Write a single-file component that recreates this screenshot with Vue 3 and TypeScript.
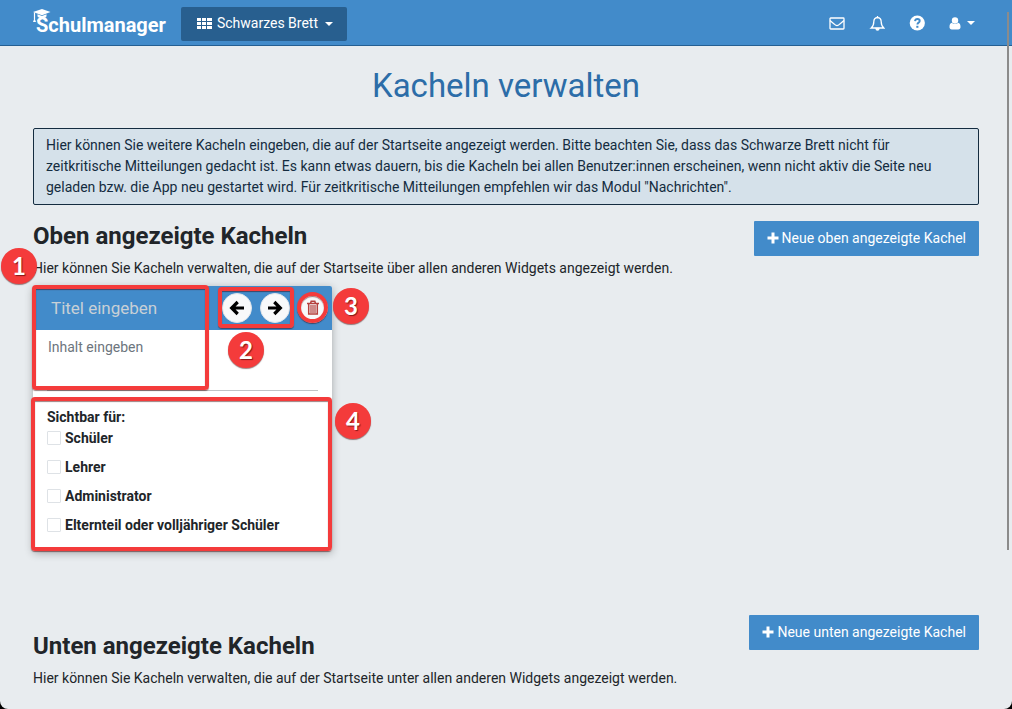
<script setup lang="ts">
import { ref } from 'vue'

interface Audience {
  id: string
  label: string
  checked: boolean
}

const title = ref('')
const content = ref('')
const audiences = ref<Audience[]>([
  { id: 'students', label: 'Schüler', checked: false },
  { id: 'teachers', label: 'Lehrer', checked: false },
  { id: 'admins', label: 'Administrator', checked: false },
  { id: 'parents', label: 'Elternteil oder volljähriger Schüler', checked: false },
])
</script>

<template>
  <div class="window">
    <div class="page">
      <header class="navbar">
        <a class="brand" href="#">
          <svg class="cap" viewBox="0 0 18 14" aria-hidden="true">
            <path d="M0 3 9 0l8.500 3L9 6.200z" fill="#fff" />
            <path d="M4.500 5.200v2.300L9 8.500l4.500-1V5.200L9 7z" fill="#fff" />
            <path d="M4.500 11.500 13 7.500M13.500 11 5 7.500" stroke="#fff" stroke-width="1.300" />
            <path d="M1.500 3.500V10" stroke="#fff" stroke-width="1.200" />
            <path d="M1.500 9 0 13h3z" fill="#fff" />
          </svg>
          <span>Schulmanager</span>
        </a>
        <button class="module" type="button">
          <svg class="grid-icon" viewBox="0 0 15 12" aria-hidden="true">
            <path d="M0 0h4v3H0zM5 0h4v3H5zM10 0h5v3h-5zM0 4h4v3H0zM5 4h4v3H5zM10 4h5v3h-5zM0 8h4v3H0zM5 8h4v3H5zM10 8h5v3h-5z" fill="#fff" />
          </svg>
          <span>Schwarzes Brett</span>
          <i class="caret"></i>
        </button>
        <nav class="tools">
          <a href="#" aria-label="Nachrichten">
            <svg width="16" height="14" viewBox="0 0 16 14" fill="none" stroke="#fff" stroke-width="1.300">
              <rect x="1" y="2" width="14" height="11" rx=".7" />
              <path d="M1 4.500c2 2 4 3.300 5.500 4.500q1.500 1.100 3 0C11 7.800 13 6.500 15 4.500" />
            </svg>
          </a>
          <a href="#" aria-label="Benachrichtigungen">
            <svg width="16" height="16" viewBox="0 0 16 16" fill="none" stroke="#fff" stroke-width="1.300">
              <path d="M8.500 2.500C5.800 2.700 4.800 4.500 4.800 6.800c0 3-.8 4.700-2.600 6.200h12.600c-1.800-1.500-2.600-3.200-2.600-6.200C12.200 4.500 11.200 2.700 8.500 2.500zM8.500 1v1.500" />
              <path d="M7 13.500q.1 1.600 1.500 1.600t1.500-1.600z" fill="#fff" />
            </svg>
          </a>
          <a href="#" aria-label="Hilfe">
            <svg width="16" height="16" viewBox="0 0 16 16">
              <circle cx="8.300" cy="8" r="7.600" fill="#fff" />
              <path d="M6 6.200C6.200 4.700 7.100 4 8.400 4c1.400 0 2.300.8 2.300 1.900 0 1.900-2.300 1.600-2.300 3.600" fill="none" stroke="#428bca" stroke-width="1.900" />
              <path d="M7.300 10.800h2.100v2H7.300z" fill="#428bca" />
            </svg>
          </a>
          <a href="#" class="user" aria-label="Benutzerkonto">
            <svg width="12" height="14" viewBox="0 0 12 14" fill="#fff">
              <circle cx="6" cy="4.500" r="3.200" />
              <path d="M3 6.800C1.200 7.100.5 8.600.5 11c0 1.600.8 2.500 2.300 2.500h6.400c1.500 0 2.300-.9 2.300-2.500C11.500 8.600 10.800 7.100 9 6.800 8 8.500 4 8.500 3 6.800z" />
            </svg>
            <i class="caret"></i>
          </a>
        </nav>
      </header>

      <main>
        <h1>Kacheln verwalten</h1>
        <p class="info">
          Hier können Sie weitere Kacheln eingeben, die auf der Startseite angezeigt werden. Bitte beachten Sie, dass das Schwarze Brett nicht für zeitkritische Mitteilungen gedacht ist. Es kann etwas dauern, bis die Kacheln bei allen Benutzer:innen erscheinen, wenn nicht aktiv die Seite neu geladen bzw. die App neu gestartet wird. Für zeitkritische Mitteilungen empfehlen wir das Modul "Nachrichten".
        </p>

        <section class="upper">
          <div class="section-head">
            <h2>Oben angezeigte Kacheln</h2>
            <button class="add" type="button">
              <svg width="12" height="14" viewBox="0 0 12 14" aria-hidden="true"><path d="M4.500 0.500h3v4h4v3h-4v4h-3v-4h-4v-3h4z" fill="#fff" /></svg>
              Neue oben angezeigte Kachel
            </button>
          </div>
          <p class="hint">Hier können Sie Kacheln verwalten, die auf der Startseite über allen anderen Widgets angezeigt werden.</p>

          <article class="tile">
            <div class="tile-head">
              <input v-model="title" class="tile-title" type="text" placeholder="Titel eingeben" aria-label="Titel" />
              <button class="round" type="button" aria-label="Nach links">
                <svg width="16" height="16" viewBox="0 0 16 16" fill="none" stroke="#000" stroke-width="3.200"><path d="M15 8H2.700M8.700 2 2.700 8l6 6" /></svg>
              </button>
              <button class="round" type="button" aria-label="Nach rechts">
                <svg width="16" height="16" viewBox="0 0 16 16" fill="none" stroke="#000" stroke-width="3.200"><path d="M1 8h12.300M7.300 2l6 6-6 6" /></svg>
              </button>
              <button class="round" type="button" aria-label="Löschen">
                <svg width="14" height="16" viewBox="0 0 14 16" fill="none" stroke="#b5413e" stroke-width="1.500"><path d="M1 3.500h12M4.500 3.500l.7-2.300h3.600l.7 2.300M2.700 3.500V14h8.600V3.500" /><path d="M5 5v8M7 5v8M9 5v8" stroke-width="1.200" /></svg>
              </button>
            </div>
            <div class="tile-body">
              <textarea v-model="content" placeholder="Inhalt eingeben" aria-label="Inhalt"></textarea>
              <fieldset>
                <legend>Sichtbar für:</legend>
                <label v-for="a in audiences" :key="a.id" :for="a.id">
                  <input :id="a.id" v-model="a.checked" type="checkbox" />
                  <span>{{ a.label }}</span>
                </label>
              </fieldset>
            </div>
            <div class="frame frame-text"></div>
            <div class="frame frame-move"></div>
            <div class="frame frame-delete"></div>
            <div class="frame frame-visibility"></div>
            <span class="badge badge-1">1</span>
            <span class="badge badge-2">2</span>
            <span class="badge badge-3">3</span>
            <span class="badge badge-4">4</span>
          </article>
        </section>

        <section class="lower">
          <div class="section-head">
            <h2>Unten angezeigte Kacheln</h2>
            <button class="add" type="button">
              <svg width="12" height="14" viewBox="0 0 12 14" aria-hidden="true"><path d="M4.500 0.500h3v4h4v3h-4v4h-3v-4h-4v-3h4z" fill="#fff" /></svg>
              Neue unten angezeigte Kachel
            </button>
          </div>
          <p class="hint">Hier können Sie Kacheln verwalten, die auf der Startseite unter allen anderen Widgets angezeigt werden.</p>
        </section>
      </main>
      <div class="scroll-thumb"></div>
    </div>
  </div>
</template>

<style>
body {
  margin: 0;
  background: #000;
}
</style>

<style scoped>
.window,
.window * {
  box-sizing: border-box;
}
.page {
  position: relative;
  min-height: 100vh;
  overflow: hidden;
  background: #e8ecef;
  border-radius: 0 0 8px 8px;
  color: #212529;
  font: 14px/21px Roboto, "Liberation Sans", sans-serif;
}
button,
input,
textarea {
  font: inherit;
}
a {
  color: inherit;
  text-decoration: none;
}
.navbar {
  display: flex;
  align-items: center;
  height: 46px;
  padding: 0 37px 0 33px;
  background: #428bca;
  border-bottom: 1px solid #245f92;
  color: #fff;
}
.brand {
  position: relative;
  padding: 4px 0 0 3px;
  margin-right: 15px;
  font-size: 20px;
  font-weight: 700;
  line-height: 24px;
}
.cap {
  position: absolute;
  left: 0;
  top: 0;
  width: 18px;
  height: 14px;
}
.module {
  display: flex;
  align-items: center;
  height: 34px;
  margin-top: 2px;
  padding: 0 14px 0 16px;
  border: 0;
  border-radius: 2px;
  background: #285f8f;
  color: #fff;
}
.grid-icon {
  width: 15px;
  height: 12px;
  margin-right: 5px;
}
.caret {
  width: 0;
  height: 0;
  margin-left: 7px;
  border: 4px solid transparent;
  border-top-color: #fff;
  border-bottom: 0;
}
.tools {
  display: flex;
  align-items: center;
  gap: 24px;
  margin-left: auto;
}
.tools a {
  display: flex;
  align-items: center;
}
.tools .caret {
  margin-left: 6px;
}
main {
  padding: 0 33px;
}
h1 {
  margin: 19px 0 22px;
  color: #2c6da8;
  font-size: 33px;
  font-weight: 400;
  line-height: 41px;
  text-align: center;
}
.info {
  margin: 0 0 16px;
  padding: 6px 12px;
  border: 1px solid #142c40;
  border-radius: 2px;
  background: #d5e1ea;
  color: #142c40;
}
.section-head {
  display: flex;
  align-items: flex-start;
  justify-content: space-between;
}
h2 {
  margin: 0 0 4px;
  font-size: 24px;
  font-weight: 700;
  line-height: 31px;
}
.add {
  display: flex;
  align-items: center;
  gap: 3px;
  height: 35px;
  padding: 0 13px;
  border: 0;
  border-radius: 1px;
  background: #428bca;
  color: #fff;
}
.hint {
  margin: 2px 0 7px;
}
.lower {
  margin-top: 64px;
}
.lower h2 {
  margin-top: 16px;
}
.tile {
  position: relative;
  width: 299px;
  border-radius: 2px;
  background: #fff;
  box-shadow: 0 2px 8px rgba(0, 0, 0, 0.3);
}
.tile-head {
  display: flex;
  align-items: center;
  gap: 8px;
  height: 44px;
  padding: 0 4px 0 18px;
  border-radius: 2px 2px 0 0;
  background: #428bca;
}
.tile-title {
  flex: 1;
  min-width: 0;
  padding: 0;
  border: 0;
  background: none;
  color: #fff;
  font-size: 17px;
}
.tile-title::placeholder {
  color: #c8d0d6;
  opacity: 1;
}
.round {
  display: flex;
  flex: none;
  align-items: center;
  justify-content: center;
  width: 30px;
  height: 30px;
  padding: 0;
  border: 1px solid #e1e5ea;
  border-radius: 50%;
  background: #f8f9fa;
}
.tile-body {
  padding: 6px 14px 15px;
}
textarea {
  display: block;
  width: 100%;
  height: 55px;
  padding: 1px;
  border: 0;
  border-bottom: 1px solid #c0c3c6;
  background: none;
  line-height: 21px;
  resize: none;
}
textarea::placeholder {
  color: #6c757d;
  opacity: 1;
}
fieldset {
  margin: 16px 0 0;
  padding: 0;
  border: 0;
  font-weight: 700;
}
legend {
  padding: 0;
}
label {
  display: flex;
  align-items: center;
  gap: 4px;
  margin-bottom: 8px;
}
label:last-child {
  margin-bottom: 0;
}
input[type="checkbox"] {
  appearance: none;
  width: 14px;
  height: 14px;
  margin: 0 0 1px;
  border: 1px solid #dee2e6;
  border-radius: 1px;
  background: #fff;
}
.frame {
  position: absolute;
  border: 4px solid #f43b3b;
  border-radius: 4px;
  box-shadow: 0 1px 1px rgba(60, 0, 0, 0.5), inset 0 1px 1px rgba(60, 0, 0, 0.5);
  pointer-events: none;
}
.frame-text {
  left: -1px;
  top: -1px;
  width: 177px;
  height: 105px;
}
.frame-move {
  left: 185px;
  top: 1px;
  width: 76px;
  height: 41px;
}
.frame-delete {
  left: 264px;
  top: 6px;
  width: 31px;
  height: 31px;
  border-radius: 50%;
}
.frame-visibility {
  left: -2px;
  top: 111px;
  width: 301px;
  height: 154px;
}
.badge {
  position: absolute;
  width: 36px;
  height: 36px;
  border-radius: 50%;
  background: #f43b3b;
  box-shadow: 0 1px 1px rgba(60, 0, 0, 0.5);
  color: #fff;
  font: 700 24px/36px Lato, "Open Sans", sans-serif;
  text-align: center;
  text-shadow: 1px 1px 1px rgba(60, 0, 0, 0.6);
}
.badge-1 {
  left: -32px;
  top: -38px;
}
.badge-2 {
  left: 195px;
  top: 46px;
}
.badge-3 {
  left: 300px;
  top: 2px;
}
.badge-4 {
  left: 302px;
  top: 117px;
}
.scroll-thumb {
  position: absolute;
  top: 12px;
  right: 3px;
  width: 2px;
  height: 538px;
  background: #8b8b8b;
}
</style>
